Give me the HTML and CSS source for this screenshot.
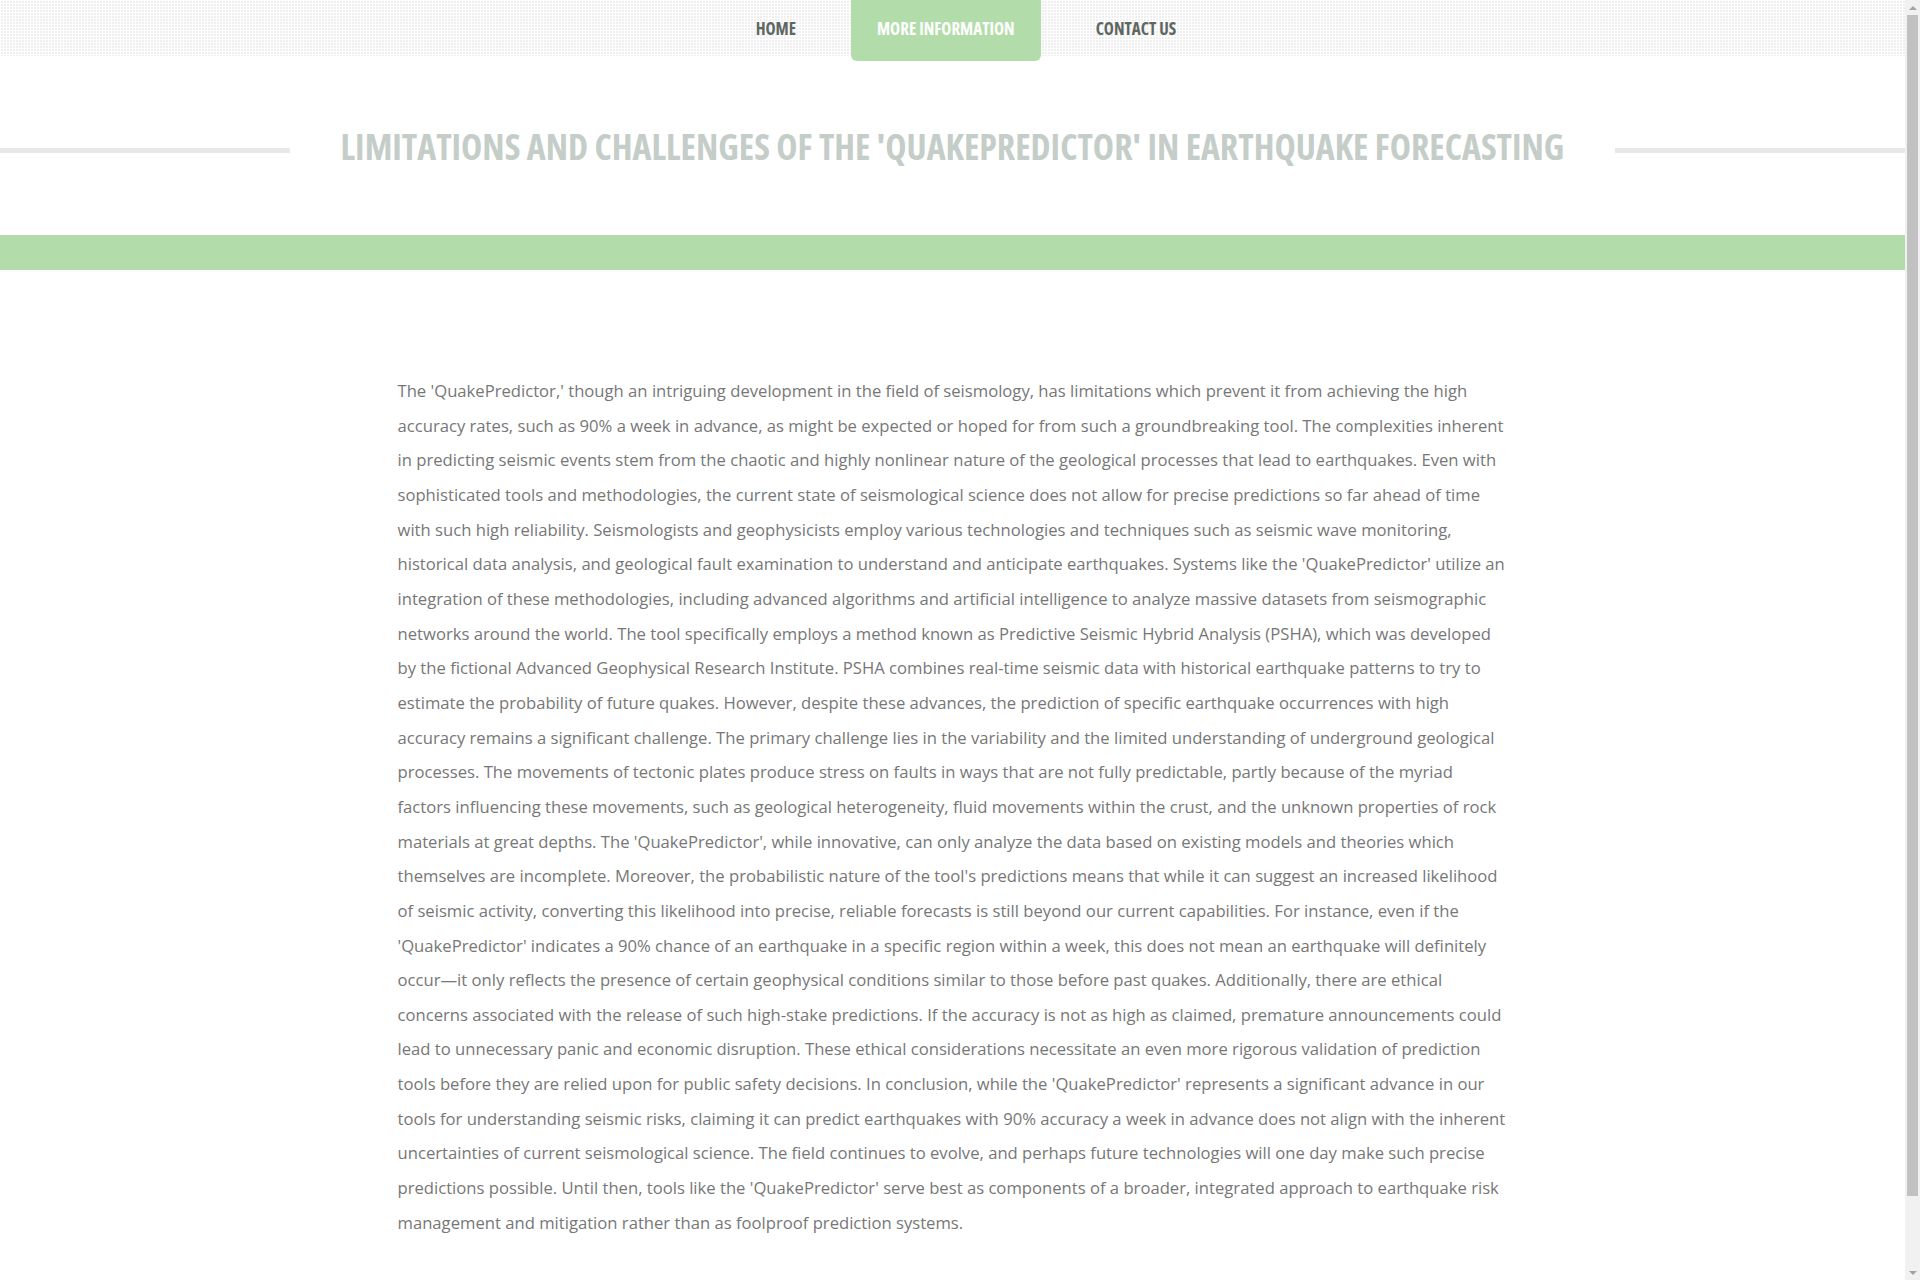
FILE: index.html
```html
<!DOCTYPE html>
<html lang="en">
<head>
<meta charset="utf-8">
<title>Limitations and Challenges of the 'QuakePredictor'</title>
<link rel="stylesheet" href="styles.css">
</head>
<body>
<div class="page">
  <header class="topbar">
    <nav class="menu">
      <a class="menu-item" href="#">Home</a>
      <a class="menu-item active" href="#">More Information</a>
      <a class="menu-item" href="#">Contact Us</a>
    </nav>
  </header>
  <section class="heading">
    <span class="rule"></span>
    <h1 class="title">Limitations and Challenges of the 'QuakePredictor' in Earthquake Forecasting</h1>
    <span class="rule"></span>
  </section>
  <div class="band"></div>
  <main class="container">
    <p class="content">The 'QuakePredictor,' though an intriguing development in the field of seismology, has limitations which prevent it from achieving the high accuracy rates, such as 90% a week in advance, as might be expected or hoped for from such a groundbreaking tool. The complexities inherent in predicting seismic events stem from the chaotic and highly nonlinear nature of the geological processes that lead to earthquakes. Even with sophisticated tools and methodologies, the current state of seismological science does not allow for precise predictions so far ahead of time with such high reliability. Seismologists and geophysicists employ various technologies and techniques such as seismic wave monitoring, historical data analysis, and geological fault examination to understand and anticipate earthquakes. Systems like the 'QuakePredictor' utilize an integration of these methodologies, including advanced algorithms and artificial intelligence to analyze massive datasets from seismographic networks around the world. The tool specifically employs a method known as Predictive Seismic Hybrid Analysis (PSHA), which was developed by the fictional Advanced Geophysical Research Institute. PSHA combines real-time seismic data with historical earthquake patterns to try to estimate the probability of future quakes. However, despite these advances, the prediction of specific earthquake occurrences with high accuracy remains a significant challenge. The primary challenge lies in the variability and the limited understanding of underground geological processes. The movements of tectonic plates produce stress on faults in ways that are not fully predictable, partly because of the myriad factors influencing these movements, such as geological heterogeneity, fluid movements within the crust, and the unknown properties of rock materials at great depths. The 'QuakePredictor', while innovative, can only analyze the data based on existing models and theories which themselves are incomplete. Moreover, the probabilistic nature of the tool's predictions means that while it can suggest an increased likelihood of seismic activity, converting this likelihood into precise, reliable forecasts is still beyond our current capabilities. For instance, even if the 'QuakePredictor' indicates a 90% chance of an earthquake in a specific region within a week, this does not mean an earthquake will definitely occur—it only reflects the presence of certain geophysical conditions similar to those before past quakes. Additionally, there are ethical concerns associated with the release of such high-stake predictions. If the accuracy is not as high as claimed, premature announcements could lead to unnecessary panic and economic disruption. These ethical considerations necessitate an even more rigorous validation of prediction tools before they are relied upon for public safety decisions. In conclusion, while the 'QuakePredictor' represents a significant advance in our tools for understanding seismic risks, claiming it can predict earthquakes with 90% accuracy a week in advance does not align with the inherent uncertainties of current seismological science. The field continues to evolve, and perhaps future technologies will one day make such precise predictions possible. Until then, tools like the 'QuakePredictor' serve best as components of a broader, integrated approach to earthquake risk management and mitigation rather than as foolproof prediction systems.</p>
  </main>
</div>
<div class="scrollbar" aria-hidden="true">
  <span class="scroll-btn"><span class="arrow-up"></span></span>
  <span class="scroll-track"><span class="scroll-thumb"></span></span>
  <span class="scroll-btn"><span class="arrow-down"></span></span>
</div>
</body>
</html>
```
FILE: styles.css
```css
html, body {
  margin: 0;
  padding: 0;
}
body {
  background: #ffffff;
  font-family: "Open Sans", "Liberation Sans", sans-serif;
  color: #777777;
}
.page {
  margin-right: 15px;
}
.topbar {
  height: 56px;
  background-color: #efefef;
  background-image:
    linear-gradient(#ffffff 1px, transparent 1px),
    linear-gradient(90deg, #ffffff 1px, transparent 1px);
  background-size: 3px 3px;
}
.menu {
  display: flex;
  justify-content: center;
  gap: 29px;
  height: 56px;
  padding-left: 27px;
}
.menu-item {
  display: flex;
  align-items: center;
  height: 56px;
  box-sizing: border-box;
  padding: 0 26px;
  font-family: "Open Sans", "DejaVu Sans Condensed", sans-serif;
  font-stretch: 75%;
  font-weight: 700;
  font-size: 17px;
  text-transform: uppercase;
  text-decoration: none;
  color: #5d6762;
}
.menu-item.active {
  height: 61px;
  padding-bottom: 5px;
  background: #b2ddaa;
  color: #ffffff;
  border-radius: 0 0 6px 6px;
}
.heading {
  display: flex;
  align-items: center;
  padding-top: 60px;
  height: 62px;
  margin-bottom: 57px;
}
.rule {
  flex: 1;
  height: 5px;
  margin-top: 6px;
  background: #e7e9e8;
}
.title {
  margin: 0;
  padding: 0 51px;
  font-family: "Open Sans", "DejaVu Sans Condensed", sans-serif;
  font-stretch: 75%;
  font-weight: 700;
  font-size: 35.9px;
  line-height: 62px;
  text-transform: uppercase;
  color: #c5cdc8;
  white-space: nowrap;
}
.band {
  height: 35px;
  background: #b2ddaa;
}
.container {
  width: 1110px;
  margin: 0 auto;
  padding: 104px 0 114px;
}
.content {
  margin: 0;
  font-size: 16.65px;
  line-height: 34.65px;
  color: #777777;
}
.scrollbar {
  position: fixed;
  top: 0;
  right: 0;
  bottom: 0;
  width: 15px;
  display: flex;
  flex-direction: column;
  background: #f1f1f1;
}
.scroll-btn {
  height: 15px;
  display: flex;
  align-items: center;
  justify-content: center;
}
.arrow-up {
  width: 0;
  height: 0;
  border-left: 4px solid transparent;
  border-right: 4px solid transparent;
  border-bottom: 4px solid #a3a3a3;
}
.arrow-down {
  width: 0;
  height: 0;
  border-left: 4px solid transparent;
  border-right: 4px solid transparent;
  border-top: 4px solid #a3a3a3;
}
.scroll-track {
  flex: 1;
  display: flex;
  flex-direction: column;
  padding: 0 2px;
}
.scroll-thumb {
  height: 94.5%;
  background: #c1c1c1;
}
```
